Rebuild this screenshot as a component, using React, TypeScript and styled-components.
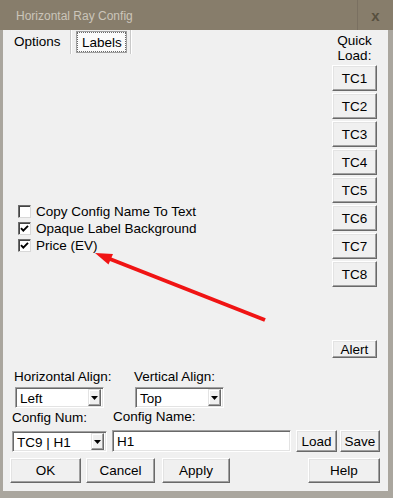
import React from "react";
import styled, { createGlobalStyle } from "styled-components";

const GlobalStyle = createGlobalStyle`
  html, body {
    margin: 0;
    padding: 0;
    background: #f0f0f0;
  }
  body {
    font-family: "Liberation Sans", Arial, sans-serif;
    font-size: 13.5px;
    color: #000;
    -webkit-font-smoothing: antialiased;
  }
`;

const Frame = styled.div`
  position: relative;
  width: 393px;
  height: 498px;
  display: flex;
  flex-direction: column;
  background: #f0f0f0;
  overflow: hidden;
`;

const TitleBar = styled.div`
  height: 30px;
  flex: none;
  display: flex;
  align-items: center;
  background: #877d6b;
  color: #cbc5ba;
  font-size: 12px;
`;

const TitleText = styled.span`
  flex: 1;
  padding-left: 16px;
  padding-top: 1px;
`;

const CloseBox = styled.div`
  width: 35px;
  height: 30px;
  border-left: 1px solid #7a7061;
  display: flex;
  align-items: center;
  justify-content: center;
  color: #57503f;
  font-size: 15px;
  font-weight: bold;
`;

const Client = styled.div`
  flex: 1;
  display: flex;
  flex-direction: column;
  border-style: solid;
  border-color: #aaa69e;
  border-width: 0 5px 7px 3px;
  background: #f0f0f0;
`;

const MainArea = styled.div`
  height: 336px;
  display: flex;
`;

const LeftPane = styled.div`
  flex: 1;
  display: flex;
  flex-direction: column;
`;

const TabStrip = styled.div`
  display: flex;
  height: 24px;
`;

const Tab = styled.div<{ $active?: boolean }>`
  display: flex;
  align-items: stretch;
  padding: ${(p) => (p.$active ? "4px 0 0 11px" : "1px 3px 1px 5px")};
  width: ${(p) => (p.$active ? "56px" : "auto")};
  border-right: 1px solid #c9c9c9;
  box-shadow: 1px 0 0 #fff;
`;

const TabFace = styled.div<{ $active?: boolean }>`
  display: flex;
  align-items: center;
  ${(p) =>
    p.$active
      ? "align-items: flex-start;"
      : `
    padding: 0 4px 0 5px;
    background: #fbfbfb;
    border: 1px solid #a0a0a0;
    outline: 1px dotted #6a6a6a;
    outline-offset: -2px;
  `}
`;

const CheckList = styled.div`
  margin-top: 149px;
  padding-left: 15px;
  display: flex;
  flex-direction: column;
`;

const CheckRow = styled.label`
  height: 17px;
  display: flex;
  align-items: center;
  gap: 5px;
`;

const Box = styled.span`
  width: 11px;
  height: 11px;
  background: #fff;
  border: 1px solid;
  border-color: #6e6e6e #d8d8d8 #d8d8d8 #6e6e6e;
  box-shadow: inset 1px 1px 0 #444;
  display: flex;
  align-items: center;
  justify-content: center;
`;

const RightColumn = styled.div`
  width: 59px;
  padding: 3px 11px 0 3px;
  box-sizing: border-box;
  display: flex;
  flex-direction: column;
  gap: 2px;
`;

const QuickLabel = styled.div`
  text-align: center;
  line-height: 15px;
  white-space: nowrap;
`;

const Button = styled.button<{ $w?: number; $h?: number; $ml?: number }>`
  font-family: "Liberation Sans", Arial, sans-serif;
  font-size: 13.5px;
  color: #000;
  background: #f0f0f0;
  width: ${(p) => (p.$w ? `${p.$w}px` : "45px")};
  height: ${(p) => (p.$h ? `${p.$h}px` : "26px")};
  margin-left: ${(p) => (p.$ml ? `${p.$ml}px` : "0")};
  flex: none;
  padding: 0;
  border: 1px solid;
  border-color: #fff #696969 #696969 #fff;
  box-shadow: inset -1px -1px 0 #a0a0a0, inset 1px 1px 0 #e3e3e3;
  border-radius: 0;
`;

const AlertButton = styled(Button)`
  margin-top: 51px;
`;

const Bottom = styled.div`
  flex: 1;
  display: flex;
  flex-direction: column;
  padding-top: 4px;
`;

const FieldRow = styled.div<{ $pl: number; $h: number }>`
  display: flex;
  align-items: flex-end;
  padding-left: ${(p) => p.$pl}px;
  height: ${(p) => p.$h}px;
`;

const Field = styled.div<{ $gap: number; $w?: number; $indent?: number }>`
  display: flex;
  flex-direction: column;
  gap: ${(p) => p.$gap}px;
  width: ${(p) => (p.$w ? `${p.$w}px` : "auto")};
  flex: none;
  white-space: nowrap;
  & > span {
    line-height: 14px;
    padding-left: ${(p) => (p.$indent ? `${p.$indent}px` : "0")};
  }
`;

const Sunken = styled.div<{ $w: number; $h: number; $ml?: number }>`
  width: ${(p) => p.$w}px;
  height: ${(p) => p.$h}px;
  margin-left: ${(p) => (p.$ml ? `${p.$ml}px` : "0")};
  box-sizing: border-box;
  background: #fff;
  border: 1px solid;
  border-color: #a0a0a0 #fff #fff #a0a0a0;
  box-shadow: inset 1px 1px 0 #696969, inset -1px -1px 0 #e3e3e3;
  display: flex;
  align-items: center;
  padding: 2px 2px 2px 4px;
`;

const SelectValue = styled.span`
  flex: 1;
  padding-top: 1px;
`;

const DropButton = styled.span`
  width: 13px;
  height: 17px;
  box-sizing: border-box;
  background: #f0f0f0;
  border: 1px solid;
  border-color: #e3e3e3 #696969 #696969 #e3e3e3;
  box-shadow: inset -1px -1px 0 #a0a0a0, inset 1px 1px 0 #fff;
  display: flex;
  align-items: center;
  justify-content: center;
`;

const Spacer = styled.div`
  flex: 1;
`;

const ButtonRow = styled.div`
  display: flex;
  padding: 6px 8px 0 7px;
`;

const ArrowLayer = styled.svg`
  position: absolute;
  left: 0;
  top: 0;
  pointer-events: none;
`;

function Check() {
  return (
    <svg width="9" height="9" viewBox="0 0 9 9">
      <path d="M1 4.2 L3.3 6.6 L8 1.8" fill="none" stroke="#000" strokeWidth="1.9" />
    </svg>
  );
}

function Select({ value, w, ml }: { value: string; w: number; ml?: number }) {
  return (
    <Sunken $w={w} $h={21} $ml={ml}>
      <SelectValue>{value}</SelectValue>
      <DropButton>
        <svg width="7" height="4" viewBox="0 0 7 4">
          <path d="M0 0 H7 L3.5 4 Z" fill="#000" />
        </svg>
      </DropButton>
    </Sunken>
  );
}

const checks = [
  { label: "Copy Config Name To Text", on: false },
  { label: "Opaque Label Background", on: true },
  { label: "Price (EV)", on: true },
];

const quick = ["TC1", "TC2", "TC3", "TC4", "TC5", "TC6", "TC7", "TC8"];

export default function App() {
  return (
    <Frame>
      <GlobalStyle />
      <TitleBar>
        <TitleText>Horizontal Ray Config</TitleText>
        <CloseBox>x</CloseBox>
      </TitleBar>
      <Client>
        <MainArea>
          <LeftPane>
            <TabStrip>
              <Tab $active>
                <TabFace $active>Options</TabFace>
              </Tab>
              <Tab>
                <TabFace>Labels</TabFace>
              </Tab>
            </TabStrip>
            <CheckList>
              {checks.map((c) => (
                <CheckRow key={c.label}>
                  <Box>{c.on ? <Check /> : null}</Box>
                  {c.label}
                </CheckRow>
              ))}
            </CheckList>
          </LeftPane>
          <RightColumn>
            <QuickLabel>
              Quick
              <br />
              Load:
            </QuickLabel>
            {quick.map((q) => (
              <Button key={q}>{q}</Button>
            ))}
            <AlertButton $h={18}>Alert</AlertButton>
          </RightColumn>
        </MainArea>
        <Bottom>
          <FieldRow $pl={11} $h={38}>
            <Field $gap={3} $w={120}>
              <span>Horizontal Align:</span>
              <Select value="Left" w={89} ml={1} />
            </Field>
            <Field $gap={3}>
              <span>Vertical Align:</span>
              <Select value="Top" w={89} ml={1} />
            </Field>
          </FieldRow>
          <FieldRow $pl={9} $h={44}>
            <Field $gap={6} $w={100}>
              <span>Config Num:</span>
              <Select value="TC9 | H1" w={95} />
            </Field>
            <Field $gap={6} $indent={1}>
              <span>Config Name:</span>
              <Sunken $w={179} $h={22}>H1</Sunken>
            </Field>
            <Button $w={41} $h={22} $ml={5}>
              Load
            </Button>
            <Button $w={40} $h={22} $ml={3}>
              Save
            </Button>
          </FieldRow>
          <ButtonRow>
            <Button $w={71} $h={25}>
              OK
            </Button>
            <Button $w={69} $h={25} $ml={5}>
              Cancel
            </Button>
            <Button $w={68} $h={25} $ml={7}>
              Apply
            </Button>
            <Spacer />
            <Button $w={72} $h={25}>
              Help
            </Button>
          </ButtonRow>
        </Bottom>
      </Client>
      <ArrowLayer width="393" height="498" viewBox="0 0 393 498">
        <line x1="265" y1="320" x2="110" y2="259" stroke="#f01414" strokeWidth="4" />
        <polygon points="95,253 113,254 108.5,264.5" fill="#f01414" />
      </ArrowLayer>
    </Frame>
  );
}
